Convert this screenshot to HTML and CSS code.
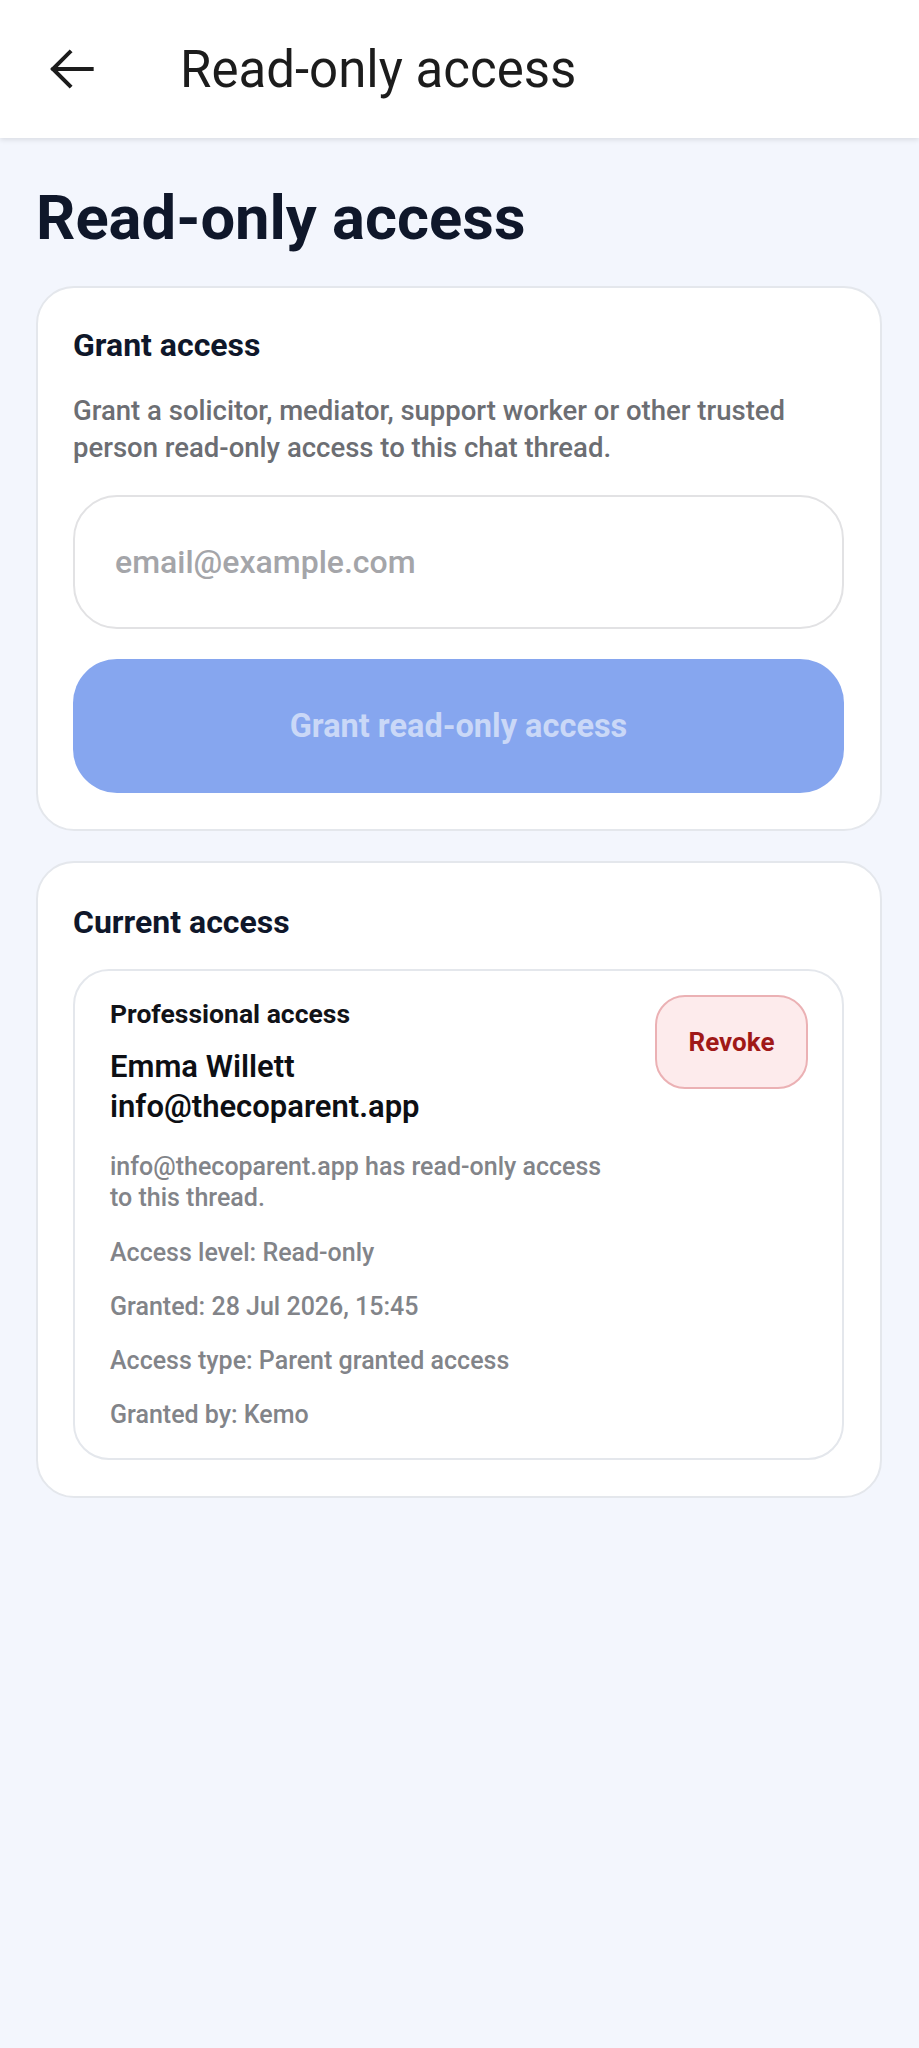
FILE: index.html
```html
<!DOCTYPE html>
<html lang="en">
<head>
<meta charset="utf-8">
<title>Read-only access</title>
<link rel="stylesheet" href="styles.css">
</head>
<body>
<header class="appbar">
  <button class="back" aria-label="Back">
    <svg viewBox="0 0 24 24" width="62" height="62"><path d="M20 12H5.2M11.5 5.5L5 12l6.5 6.5" fill="none" stroke="#1c1c1c" stroke-width="1.55" stroke-linecap="square" stroke-linejoin="miter"/></svg>
  </button>
  <div class="appbar-title">Read-only access</div>
</header>
<main class="page">
  <h1 class="page-title">Read-only access</h1>

  <section class="card">
    <h2 class="card-title">Grant access</h2>
    <p class="card-desc">Grant a solicitor, mediator, support worker or other trusted person read-only access to this chat thread.</p>
    <input class="email-input" type="email" placeholder="email@example.com">
    <button class="grant-btn" disabled>Grant read-only access</button>
  </section>

  <section class="card card-current">
    <h2 class="card-title">Current access</h2>
    <div class="access-item">
      <div class="access-info">
        <div class="access-kind">Professional access</div>
        <div class="access-name">Emma Willett<br>info@thecoparent.app</div>
        <p class="access-note">info@thecoparent.app has read-only access to this thread.</p>
        <div class="access-meta">Access level: Read-only</div>
        <div class="access-meta">Granted: 28 Jul 2026, 15:45</div>
        <div class="access-meta">Access type: Parent granted access</div>
        <div class="access-meta">Granted by: Kemo</div>
      </div>
      <button class="revoke-btn">Revoke</button>
    </div>
  </section>
</main>
</body>
</html>
```
FILE: styles.css
```css
* { box-sizing: border-box; }
html, body { margin: 0; padding: 0; }
body {
  background: #f3f6fd;
  font-family: Roboto, "Liberation Sans", Arial, sans-serif;
  min-height: 2048px;
}
.appbar {
  height: 138px;
  background: #ffffff;
  display: flex;
  align-items: center;
  box-shadow: 0 2px 5px rgba(0, 0, 0, 0.10);
  position: relative;
}
.back {
  width: 62px;
  height: 62px;
  margin-left: 40px;
  padding: 0;
  border: 0;
  background: none;
  display: flex;
}
.appbar-title {
  margin-left: 78px;
  font-size: 51px;
  font-weight: 400;
  color: #1c1c1c;
  line-height: 60px;
  margin-top: 2px;
}
.page {
  padding: 44px 37px 0 36px;
}
.page-title {
  margin: 0 0 32px 0;
  font-size: 61.5px;
  line-height: 72px;
  font-weight: 700;
  color: #0f172a;
}
.card {
  background: #ffffff;
  border: 2px solid #e4e7ec;
  border-radius: 38px;
  padding: 37px 36px 36px 35px;
  display: flex;
  flex-direction: column;
}
.card-current {
  margin-top: 30px;
  padding-top: 39px;
}
.card-title {
  margin: 0;
  font-size: 32px;
  line-height: 40px;
  font-weight: 700;
  color: #0f172a;
}
.card-desc {
  margin: 27px 0 0 0;
  font-size: 27.5px;
  line-height: 37px;
  font-weight: 500;
  color: #6c6e73;
}
.email-input {
  margin-top: 29px;
  height: 134px;
  border: 2px solid #e2e2e4;
  border-radius: 44px;
  padding: 0 40px;
  font-family: inherit;
  font-size: 32px;
  font-weight: 500;
  background: #fff;
  outline: none;
}
.email-input::placeholder { color: #a4a5a9; }
.grant-btn {
  margin-top: 30px;
  height: 134px;
  border: 0;
  border-radius: 44px;
  background: #86a6ef;
  color: #cad8f7;
  font-family: inherit;
  font-size: 32.5px;
  font-weight: 700;
}
.access-item {
  margin-top: 27px;
  border: 2px solid #e4e7ec;
  border-radius: 36px;
  padding: 26px 34px 27px 35px;
  display: flex;
  align-items: flex-start;
  gap: 32px;
}
.access-info { flex: 1; min-width: 0; }
.access-kind {
  font-size: 26.5px;
  line-height: 34px;
  font-weight: 700;
  color: #111318;
}
.access-name {
  margin-top: 16px;
  font-size: 31px;
  line-height: 40px;
  font-weight: 600;
  color: #0d0f14;
}
.access-note {
  margin: 24px 0 0 0;
  font-size: 25px;
  line-height: 31px;
  font-weight: 500;
  color: #828489;
}
.access-meta {
  margin-top: 22px;
  font-size: 25px;
  line-height: 32px;
  font-weight: 500;
  color: #828489;
}
.access-note + .access-meta { margin-top: 24px; }
.revoke-btn {
  margin-top: -2px;
  width: 153px;
  height: 94px;
  flex: none;
  border: 2px solid #ebb1b4;
  border-radius: 30px;
  background: #fdebec;
  color: #a01818;
  font-family: inherit;
  font-size: 26px;
  font-weight: 700;
}
```
